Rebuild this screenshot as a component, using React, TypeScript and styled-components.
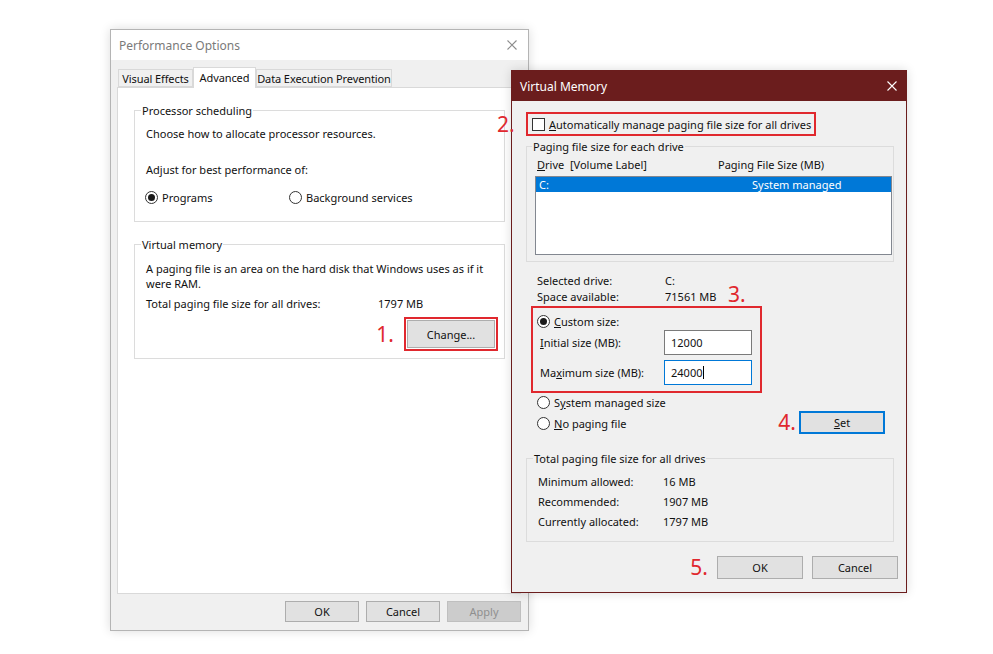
import styled, { createGlobalStyle } from "styled-components";

const RED = "#e0282e";
const BLUE = "#0078d7";
const MAROON = "#6b1d1d";

const GlobalStyle = createGlobalStyle`
  html, body {
    margin: 0;
    padding: 0;
    background: #ffffff;
  }
  body {
    font-family: "Noto Sans", "Open Sans", "DejaVu Sans", sans-serif;
    font-size: 11px;
    color: #111111;
  }
`;

function CloseIcon({ color }: { color: string }) {
  return (
    <svg width="10" height="10" viewBox="0 0 10 10">
      <path d="M0.5 0.5 L9.5 9.5 M9.5 0.5 L0.5 9.5" stroke={color} strokeWidth="1.1" fill="none" />
    </svg>
  );
}

function App() {
  return (
    <Desktop>
      <GlobalStyle />

      <Window $left={110} $top={29} $width={419} $height={602} $border="#b4b4b4">
        <TitleBar $bg="#ffffff" $padRight={11}>
          <Title $color="#7a7a7a">Performance Options</Title>
          <CloseIcon color="#8c8c8c" />
        </TitleBar>

        <PerfBody>
          <TabRow>
            <Tab $width={75}>Visual Effects</Tab>
            <Tab $width={63} $selected>
              Advanced
            </Tab>
            <Tab $width={136}>Data Execution Prevention</Tab>
          </TabRow>

          <TabPanel>
            <GroupBox $bg="#ffffff" $pad="0 0 16px 11px">
              <Caption $bg="#ffffff" $ml={-5}>
                Processor scheduling
              </Caption>
              <Line $mt={8}>Choose how to allocate processor resources.</Line>
              <Line $mt={21}>Adjust for best performance of:</Line>
              <RadioRow>
                <Option>
                  <Radio $checked />
                  Programs
                </Option>
                <Option>
                  <Radio />
                  Background services
                </Option>
              </RadioRow>
            </GroupBox>

            <GroupBox $bg="#ffffff" $pad="0 0 7px 11px" $mt={22}>
              <Caption $bg="#ffffff" $ml={-5}>
                Virtual memory
              </Caption>
              <Line $mt={9}>A paging file is an area on the hard disk that Windows uses as if it</Line>
              <Line>were RAM.</Line>
              <InfoGrid $cols="232px auto" $mt={5}>
                <span>Total paging file size for all drives:</span>
                <span>1797 MB</span>
              </InfoGrid>
              <ActionRow>
                <Annotation>1.</Annotation>
                <RedFrame $pad="1px">
                  <Button $width={88} $height={28}>
                    Change...
                  </Button>
                </RedFrame>
              </ActionRow>
            </GroupBox>
          </TabPanel>

          <ButtonRow $gap={7} $mt={7}>
            <Button $width={74} $height={21}>
              OK
            </Button>
            <Button $width={74} $height={21}>
              Cancel
            </Button>
            <Button $width={74} $height={21} $disabled>
              Apply
            </Button>
          </ButtonRow>
        </PerfBody>
      </Window>

      <Window $left={511} $top={70} $width={396} $height={523} $border={MAROON}>
        <TitleBar $bg={MAROON} $padRight={9}>
          <Title $color="#ffffff">Virtual Memory</Title>
          <CloseIcon color="#ffffff" />
        </TitleBar>

        <VMBody>
          <CheckLine>
            <Annotation>2.</Annotation>
            <RedFrame $pad="3px 3px 2px 4px">
              <Option>
                <Checkbox />
                <span>
                  <u>A</u>utomatically manage paging file size for all drives
                </span>
              </Option>
            </RedFrame>
          </CheckLine>

          <GroupBox $bg="#f0f0f0" $pad="0 1px 6px 8px" $mt={10} $mr={4}>
            <Caption $bg="#f0f0f0" $ml={-3}>
              Paging file size for each drive
            </Caption>
            <ListHeader>
              <span>
                <u>D</u>rive&nbsp;&nbsp;[Volume Label]
              </span>
              <span>Paging File Size (MB)</span>
            </ListHeader>
            <ListBox>
              <ListItem $selected>
                <span>C:</span>
                <span>System managed</span>
              </ListItem>
            </ListBox>
          </GroupBox>

          <DriveInfo>
            <span>Selected drive:</span>
            <span>C:</span>
            <span />
            <span>Space available:</span>
            <span>71561 MB</span>
            <StepNumber>3.</StepNumber>
          </DriveInfo>

          <CustomFrame>
            <Option>
              <Radio $checked />
              <span>
                <u>C</u>ustom size:
              </span>
            </Option>
            <FieldRow $mt={1}>
              <span>
                <u>I</u>nitial size (MB):
              </span>
              <TextBox>12000</TextBox>
            </FieldRow>
            <FieldRow $mt={5}>
              <span>
                Ma<u>x</u>imum size (MB):
              </span>
              <TextBox $focused>
                24000
                <Caret />
              </TextBox>
            </FieldRow>
          </CustomFrame>

          <ChoiceSection>
            <RadioColumn>
              <Option>
                <Radio />
                <span>
                  S<u>y</u>stem managed size
                </span>
              </Option>
              <Option>
                <Radio />
                <span>
                  <u>N</u>o paging file
                </span>
              </Option>
            </RadioColumn>
            <SetGroup>
              <Annotation>4.</Annotation>
              <Button $width={86} $height={23} $focused>
                <u>S</u>et
              </Button>
            </SetGroup>
          </ChoiceSection>

          <GroupBox $bg="#f0f0f0" $pad="0 0 10px 11px" $mt={24} $mr={4}>
            <Caption $bg="#f0f0f0" $ml={-5}>
              Total paging file size for all drives
            </Caption>
            <TotalsGrid>
              <span>Minimum allowed:</span>
              <span>16 MB</span>
              <span>Recommended:</span>
              <span>1907 MB</span>
              <span>Currently allocated:</span>
              <span>1797 MB</span>
            </TotalsGrid>
          </GroupBox>

          <ButtonRow $gap={9} $mt={14}>
            <Annotation>5.</Annotation>
            <Button $width={86} $height={23}>
              OK
            </Button>
            <Button $width={86} $height={23}>
              Cancel
            </Button>
          </ButtonRow>
        </VMBody>
      </Window>
    </Desktop>
  );
}

const Desktop = styled.div`
  position: relative;
  width: 993px;
  height: 654px;
  overflow: hidden;
  background: #ffffff;
`;

const Window = styled.div<{ $left: number; $top: number; $width: number; $height: number; $border: string }>`
  position: absolute;
  left: ${(p) => p.$left}px;
  top: ${(p) => p.$top}px;
  width: ${(p) => p.$width}px;
  height: ${(p) => p.$height}px;
  box-sizing: border-box;
  border: 1px solid ${(p) => p.$border};
  background: #f0f0f0;
  display: flex;
  flex-direction: column;
  box-shadow: 0 0 10px rgba(0, 0, 0, 0.14);
`;

const TitleBar = styled.div<{ $bg: string; $padRight: number }>`
  height: 30px;
  flex-shrink: 0;
  display: flex;
  align-items: center;
  justify-content: space-between;
  padding: 0 ${(p) => p.$padRight}px 0 8px;
  background: ${(p) => p.$bg};
`;

const Title = styled.span<{ $color: string }>`
  font-size: 12px;
  color: ${(p) => p.$color};
`;

const PerfBody = styled.div`
  flex: 1;
  display: flex;
  flex-direction: column;
  padding: 7px 7px 8px 6px;
  min-height: 0;
`;

const TabRow = styled.div`
  display: flex;
  align-items: flex-end;
  height: 20px;
  padding-left: 1px;
`;

const Tab = styled.div<{ $width: number; $selected?: boolean }>`
  position: relative;
  z-index: ${(p) => (p.$selected ? 1 : 0)};
  box-sizing: border-box;
  width: ${(p) => p.$width}px;
  height: ${(p) => (p.$selected ? 21 : 18)}px;
  margin-bottom: ${(p) => (p.$selected ? -1 : 0)}px;
  display: flex;
  align-items: ${(p) => (p.$selected ? "flex-start" : "center")};
  padding-top: ${(p) => (p.$selected ? 2 : 0)}px;
  justify-content: center;
  border: 1px solid #d9d9d9;
  border-bottom: ${(p) => (p.$selected ? "none" : "1px solid #d9d9d9")};
  background: ${(p) => (p.$selected ? "#ffffff" : "#f0f0f0")};
  white-space: nowrap;
  letter-spacing: -0.1px;
`;

const TabPanel = styled.div`
  flex: 1;
  background: #ffffff;
  border: 1px solid #d9d9d9;
  padding: 22px 15px 0 16px;
`;

const GroupBox = styled.div<{ $bg: string; $pad: string; $mt?: number; $mr?: number }>`
  border: 1px solid #dcdcdc;
  padding: ${(p) => p.$pad};
  margin-top: ${(p) => p.$mt ?? 0}px;
  margin-right: ${(p) => p.$mr ?? 0}px;
  background: ${(p) => p.$bg};
`;

const Caption = styled.div<{ $bg: string; $ml: number }>`
  width: fit-content;
  margin-top: -8px;
  margin-left: ${(p) => p.$ml}px;
  padding: 0 1px;
  line-height: 15px;
  background: ${(p) => p.$bg};
  white-space: nowrap;
`;

const Line = styled.div<{ $mt?: number }>`
  margin-top: ${(p) => p.$mt ?? 0}px;
  line-height: 15px;
  white-space: nowrap;
`;

const RadioRow = styled.div`
  display: grid;
  grid-template-columns: 144px auto;
  margin: 13px 0 0 -1px;
`;

const Option = styled.div`
  display: flex;
  align-items: center;
  gap: 4px;
  height: 15px;
  line-height: 15px;
  white-space: nowrap;
`;

const Radio = styled.span<{ $checked?: boolean }>`
  width: 13px;
  height: 13px;
  box-sizing: border-box;
  flex-shrink: 0;
  border: 1px solid #333333;
  border-radius: 50%;
  background: #ffffff;
  display: inline-flex;
  align-items: center;
  justify-content: center;

  &::after {
    content: "";
    width: 7px;
    height: 7px;
    border-radius: 50%;
    background: ${(p) => (p.$checked ? "#1a1a1a" : "transparent")};
  }
`;

const Checkbox = styled.span`
  width: 13px;
  height: 13px;
  box-sizing: border-box;
  flex-shrink: 0;
  border: 1px solid #333333;
  background: #ffffff;
`;

const InfoGrid = styled.div<{ $cols: string; $mt?: number }>`
  display: grid;
  grid-template-columns: ${(p) => p.$cols};
  margin-top: ${(p) => p.$mt ?? 0}px;
  line-height: 15px;
  white-space: nowrap;
`;

const ActionRow = styled.div`
  display: flex;
  justify-content: flex-end;
  align-items: center;
  gap: 10px;
  margin: 6px 6px 0 0;
`;

const RedFrame = styled.div<{ $pad: string }>`
  width: fit-content;
  border: 2px solid ${RED};
  padding: ${(p) => p.$pad};
`;

const Annotation = styled.span`
  font-size: 21px;
  line-height: 1;
  color: ${RED};
  white-space: nowrap;
`;

const StepNumber = styled(Annotation)`
  line-height: 16px;
  margin-top: -3px;
`;

const Button = styled.button<{ $width: number; $height: number; $disabled?: boolean; $focused?: boolean }>`
  width: ${(p) => p.$width}px;
  height: ${(p) => p.$height}px;
  box-sizing: border-box;
  padding: 0;
  font-family: inherit;
  font-size: 11px;
  color: ${(p) => (p.$disabled ? "#8f8f8f" : "#111111")};
  background: ${(p) => (p.$disabled ? "#cccccc" : "#e1e1e1")};
  border: 1px solid ${(p) => (p.$focused ? BLUE : p.$disabled ? "#bfbfbf" : "#adadad")};
  box-shadow: ${(p) => (p.$focused ? `inset 0 0 0 1px ${BLUE}` : "none")};
`;

const ButtonRow = styled.div<{ $gap: number; $mt: number }>`
  display: flex;
  justify-content: flex-end;
  align-items: center;
  gap: ${(p) => p.$gap}px;
  margin-top: ${(p) => p.$mt}px;
`;

const VMBody = styled.div`
  flex: 1;
  display: flex;
  flex-direction: column;
  padding: 11px 8px 0 14px;
`;

const CheckLine = styled.div`
  display: grid;
  grid-template-columns: 29px auto;
  align-items: center;
  justify-content: start;
  margin-left: -29px;
`;

const ListHeader = styled.div`
  display: grid;
  grid-template-columns: 181px auto;
  margin: 3px 0 0 2px;
  line-height: 15px;
  white-space: nowrap;
`;

const ListBox = styled.div`
  height: 79px;
  box-sizing: border-box;
  margin-top: 4px;
  border: 1px solid #828790;
  background: #ffffff;
`;

const ListItem = styled.div<{ $selected?: boolean }>`
  display: grid;
  grid-template-columns: 213px auto;
  height: 15px;
  line-height: 15px;
  padding-left: 3px;
  color: ${(p) => (p.$selected ? "#ffffff" : "#111111")};
  background: ${(p) => (p.$selected ? BLUE : "transparent")};
  white-space: nowrap;
`;

const DriveInfo = styled.div`
  display: grid;
  grid-template-columns: 128px 63px auto;
  grid-auto-rows: 16px;
  align-items: start;
  margin: 11px 0 0 11px;
  line-height: 16px;
  white-space: nowrap;
`;

const CustomFrame = styled(RedFrame).attrs({ $pad: "6px 8px 6px 4px" })`
  margin: 1px 0 0 5px;
`;

const FieldRow = styled.div<{ $mt: number }>`
  display: grid;
  grid-template-columns: 124px 88px;
  align-items: center;
  margin: ${(p) => p.$mt}px 0 0 3px;
  white-space: nowrap;
`;

const TextBox = styled.div<{ $focused?: boolean }>`
  height: 25px;
  box-sizing: border-box;
  display: flex;
  align-items: center;
  padding-left: 6px;
  background: #ffffff;
  border: 1px solid ${(p) => (p.$focused ? BLUE : "#7a7a7a")};
`;

const Caret = styled.span`
  width: 1px;
  height: 13px;
  margin-left: 1px;
  background: #000000;
`;

const ChoiceSection = styled.div`
  display: flex;
  justify-content: space-between;
  align-items: flex-end;
  margin: 2px 13px 0 11px;
`;

const RadioColumn = styled.div`
  display: flex;
  flex-direction: column;
  gap: 6px;
  padding-bottom: 3px;
`;

const SetGroup = styled.div`
  display: flex;
  align-items: center;
  gap: 3px;
`;

const TotalsGrid = styled.div`
  display: grid;
  grid-template-columns: 125px auto;
  grid-auto-rows: 20px;
  align-items: center;
  margin-top: 5px;
  white-space: nowrap;
`;

export default App;
